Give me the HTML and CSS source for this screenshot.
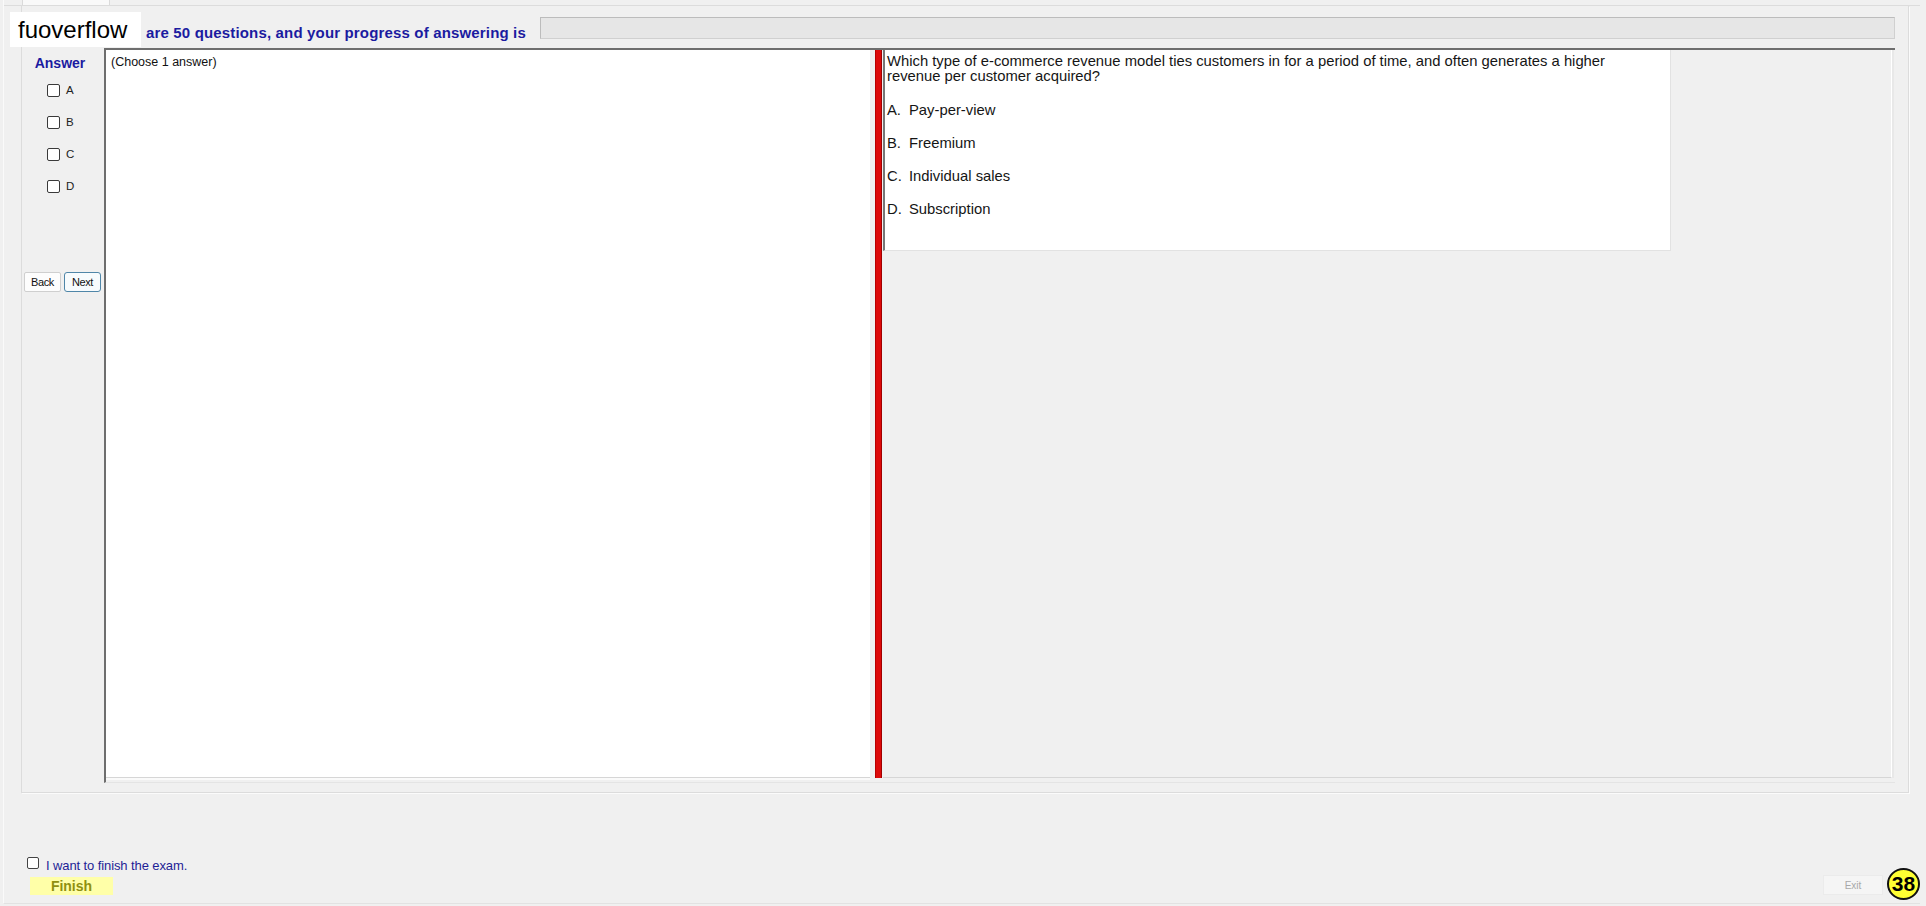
FILE: index.html
```html
<!DOCTYPE html>
<html lang="en">
<head>
    <meta charset="UTF-8">
    <title>Exam</title>
    <link rel="stylesheet" href="styles.css">
</head>
<body>
    <div class="frame">
        <div class="tabs"><div class="tab"></div></div>

        <div class="group">
            <div class="head">
                <div class="status">are 50 questions, and your progress of answering is</div>
                <div class="progress"></div>
            </div>

            <div class="body">
                <div class="answers">
                    <div class="answer-title">Answer</div>
                    <div class="opts">
                        <label class="opt"><input type="checkbox" class="box"><span>A</span></label>
                        <label class="opt"><input type="checkbox" class="box"><span>B</span></label>
                        <label class="opt"><input type="checkbox" class="box"><span>C</span></label>
                        <label class="opt"><input type="checkbox" class="box"><span>D</span></label>
                    </div>
                    <div class="nav">
                        <button class="btn">Back</button>
                        <button class="btn btn-next">Next</button>
                    </div>
                </div>

                <div class="split">
                    <div class="pane-left">(Choose 1 answer)</div>
                    <div class="splitter"><div class="bar"></div></div>
                    <div class="pane-right">
                        <div class="qbox">
                            <p class="question">Which type of e-commerce revenue model ties customers in for a period of time, and often generates a higher<br>revenue per customer acquired?</p>
                            <div class="choice"><span class="letter">A.</span>Pay-per-view</div>
                            <div class="choice"><span class="letter">B.</span>Freemium</div>
                            <div class="choice"><span class="letter">C.</span>Individual sales</div>
                            <div class="choice"><span class="letter">D.</span>Subscription</div>
                        </div>
                    </div>
                </div>
            </div>
        </div>

        <div class="foot">
            <div class="finish-col">
                <label class="finish-check"><input type="checkbox" class="box"><span>I want to finish the exam.</span></label>
                <button class="finish">Finish</button>
            </div>
            <button class="exit">Exit</button>
        </div>
    </div>

    <div class="logo">fuoverflow</div>
    <div class="badge">38</div>
</body>
</html>
```

FILE: styles.css
```css
body {
    margin: 0;
    width: 1926px;
    height: 906px;
    overflow: hidden;
    position: relative;
    background: #f0f0f0;
    font-family: "Liberation Sans", Arial, sans-serif;
    color: #111;
}
.frame {
    margin-left: 3px;
    width: 1917px;
    height: 904px;
    box-sizing: border-box;
    border-left: 1px solid #fafafa;
    border-bottom: 1px solid #e2e2e2;
    display: flex;
    flex-direction: column;
}
.tabs {
    height: 5px;
    padding-left: 18px;
    border-bottom: 1px solid #dcdcdc;
}
.tab {
    width: 86px;
    height: 5px;
    background: #f9f9f9;
    border: 1px solid #dadada;
    border-top: none;
    border-bottom: none;
}
.group {
    margin-left: 17px;
    width: 1888px;
    height: 787px;
    box-sizing: border-box;
    border: 1px solid #dcdcdc;
    border-top: none;
    box-shadow: 1px 1px 0 #fbfbfb;
    display: flex;
    flex-direction: column;
}
.head {
    height: 42px;
    display: flex;
    align-items: flex-start;
}
.status {
    margin-left: 124px;
    margin-top: 18px;
    width: 394px;
    line-height: 17px;
    font-size: 15px;
    letter-spacing: 0.16px;
    font-weight: bold;
    color: #1b1ba0;
    white-space: nowrap;
}
.progress {
    flex: 1;
    margin-top: 11px;
    margin-right: 13px;
    height: 22px;
    box-sizing: border-box;
    background: #e6e6e6;
    border: 1px solid #bcbcbc;
    border-right-color: #d0d0d0;
    border-bottom-color: #d0d0d0;
}
.body {
    flex: 1;
    display: flex;
    align-items: flex-start;
}
.answers {
    width: 82px;
    display: flex;
    flex-direction: column;
}
.answer-title {
    margin-top: 7px;
    padding-right: 6px;
    text-align: center;
    line-height: 16px;
    font-size: 14px;
    font-weight: bold;
    color: #1b1ba0;
}
.opts {
    margin-top: 3px;
}
.opt {
    height: 32px;
    display: flex;
    align-items: center;
    padding-left: 25px;
    font-size: 11.5px;
    color: #222;
}
.box {
    appearance: none;
    -webkit-appearance: none;
    margin: 0;
    width: 13px;
    height: 13px;
    box-sizing: border-box;
    border: 1px solid #3a3a3a;
    border-radius: 2px;
    background: #fff;
}
.opt span {
    margin-left: 6px;
}
.nav {
    margin-top: 70px;
    margin-left: 2px;
    display: flex;
    gap: 3px;
}
.btn {
    width: 37px;
    height: 20px;
    padding: 0;
    background: #fdfdfd;
    border: 1px solid #cfcfcf;
    border-radius: 2px;
    font-family: "Liberation Sans", Arial, sans-serif;
    font-size: 11px;
    letter-spacing: -0.4px;
    color: #111;
}
.btn-next {
    border-color: #4f86a8;
    border-radius: 3px;
    background: #f7fbfd;
}
.split {
    width: 1791px;
    height: 735px;
    box-sizing: border-box;
    display: flex;
    border-top: 2px solid #6e6e6e;
    border-left: 2px solid #6e6e6e;
    border-bottom: 1px solid #e4e4e4;
    padding-bottom: 4px;
}
.pane-left {
    width: 764px;
    background: #fff;
    border-bottom: 1px solid #d6d6d6;
    box-shadow: 0 2px 0 #fafafa;
    padding: 5px 0 0 5px;
    box-sizing: border-box;
    font-size: 12.5px;
    line-height: 15px;
}
.splitter {
    width: 13px;
    display: flex;
    padding-left: 5px;
    box-sizing: border-box;
}
.bar {
    width: 7px;
    background: #dd0a0a;
    border-left: 1px solid #b80000;
    border-right: 1px solid #a00000;
    box-sizing: border-box;
}
.pane-right {
    flex: 1;
    border-right: 1px solid #fff;
    border-bottom: 1px solid #d6d6d6;
    box-shadow: 2px 0 0 #e8e8e8;
    margin-right: 3px;
}
.qbox {
    width: 788px;
    height: 201px;
    box-sizing: border-box;
    background: #fff;
    border-left: 2px solid #777;
    border-right: 1px solid #e2e2e2;
    border-bottom: 1px solid #e2e2e2;
    padding: 4px 0 0 2px;
    font-size: 14.8px;
    color: #151515;
}
.question {
    margin: 0 0 10px 0;
    line-height: 15px;
}
.choice {
    height: 33px;
    line-height: 33px;
}
.letter {
    display: inline-block;
    width: 22px;
}
.foot {
    flex: 1;
    display: flex;
    justify-content: space-between;
    align-items: flex-end;
    padding-bottom: 8px;
}
.finish-col {
    margin-left: 23px;
    display: flex;
    flex-direction: column;
    align-items: flex-start;
}
.finish-check {
    display: flex;
    align-items: center;
    height: 12px;
    font-size: 13px;
    color: #1e1e96;
    letter-spacing: -0.1px;
}
.finish-check .box {
    width: 12px;
    height: 12px;
    border-color: #444;
}
.finish-check span {
    margin-left: 7px;
    position: relative;
    top: 2px;
}
.finish {
    margin-top: 8px;
    margin-left: 3px;
    width: 83px;
    height: 18px;
    padding: 0;
    border: none;
    background: #ffffa8;
    font-family: "Liberation Sans", Arial, sans-serif;
    font-size: 14px;
    font-weight: bold;
    color: #8f8f10;
}
.exit {
    margin-right: 37px;
    width: 60px;
    height: 20px;
    padding: 0;
    background: #f5f5f5;
    border: 1px solid #ebebeb;
    font-family: "Liberation Sans", Arial, sans-serif;
    font-size: 10px;
    color: #a8a8a8;
}
.logo {
    position: absolute;
    left: 10px;
    top: 12px;
    width: 131px;
    height: 35px;
    background: #fff;
    box-sizing: border-box;
    padding-left: 8px;
    font-size: 24px;
    line-height: 35px;
    color: #000;
}
.badge {
    position: absolute;
    left: 1887px;
    top: 868px;
    width: 33px;
    height: 32px;
    box-sizing: border-box;
    border: 2px solid #111;
    border-radius: 50%;
    background: #ffff33;
    text-align: center;
    font-size: 21px;
    line-height: 28px;
    font-weight: bold;
    color: #000;
}
```
